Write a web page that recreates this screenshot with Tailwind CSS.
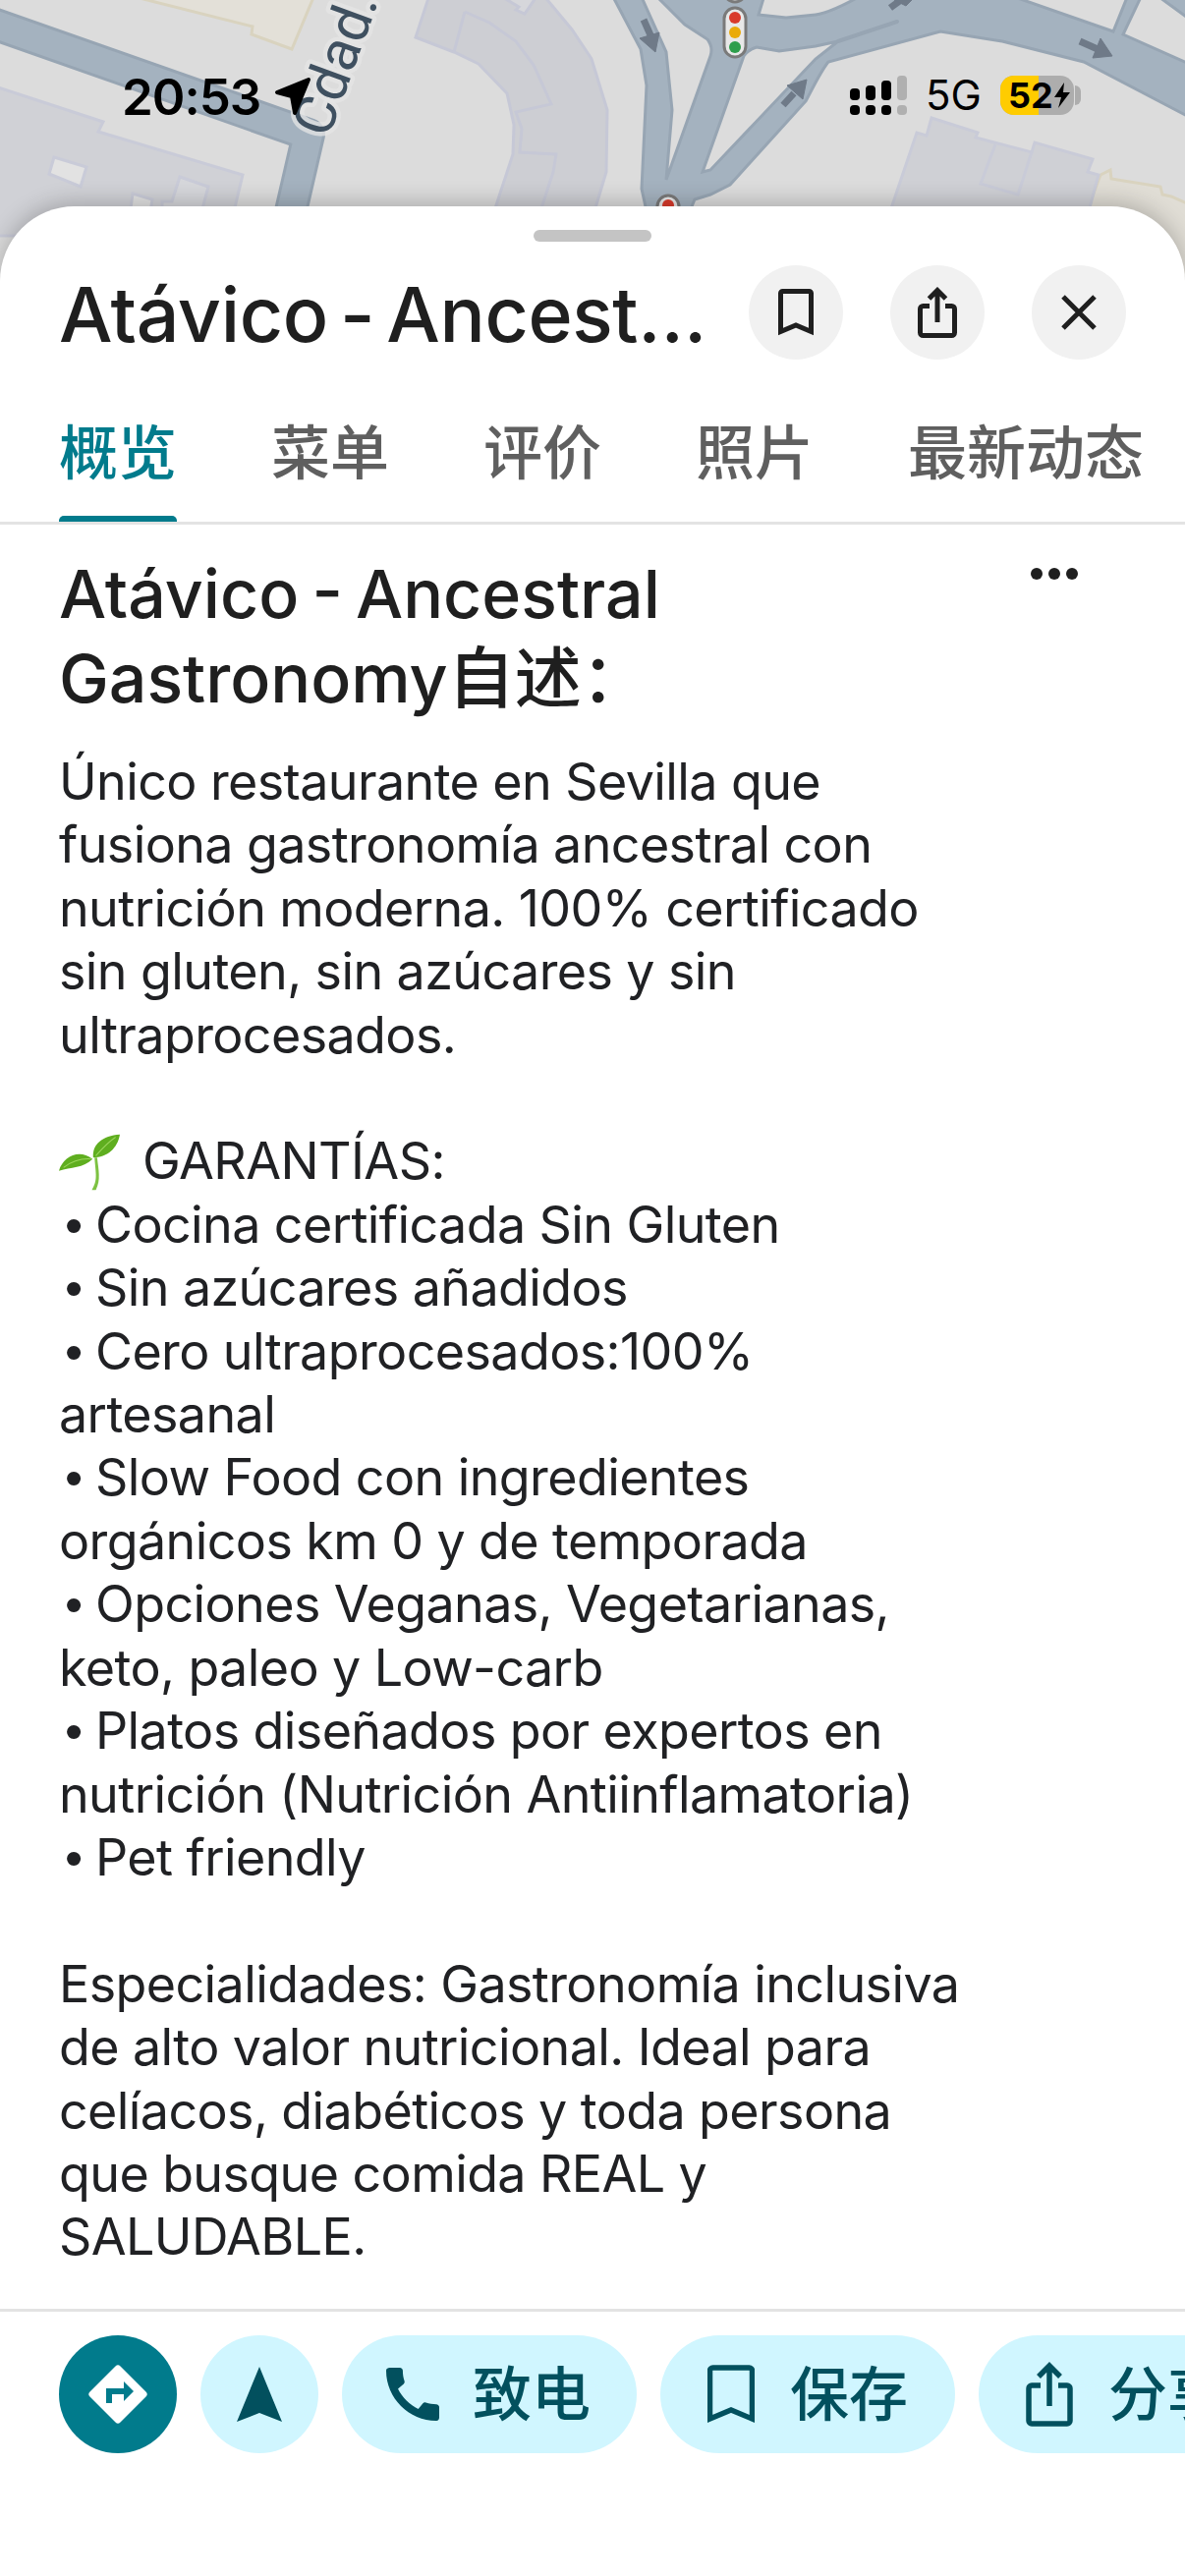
<!DOCTYPE html>
<html lang="zh">
<head>
  <meta charset="UTF-8" />
  <meta name="viewport" content="width=device-width, initial-scale=1" />
  <title>Atávico - Ancestral Gastronomy</title>
  <script src="https://cdn.jsdelivr.net/npm/@tailwindcss/browser@4"></script>
</head>
<body class="bg-white">
  <div class="relative w-[1206px] h-[2622px] overflow-hidden bg-[#dcdcdc] font-['Inter','Noto_Sans_CJK_SC',sans-serif] text-[#202124]">

    <!-- Map behind the sheet -->
    <svg class="absolute left-0 top-0" width="1206" height="300" viewBox="0 0 1206 300" xmlns="http://www.w3.org/2000/svg">
      <!-- buildings -->
      <polygon points="130,-5 257,27 256,35 297,50 320,-5" fill="#e3e0d8" stroke="#d9d3bf" stroke-width="3"/>
      <polygon points="1120,178 1130,173 1131,182 1181,190 1183,198 1192,200 1210,208 1210,295 1090,295 1108,210" fill="#e0ddd5" stroke="#d9d3bf" stroke-width="3"/>
      <polygon points="-5,88 105,124 100,134 247,178 232,240 -5,240" fill="#d0d1d6" stroke="#c9cbd8" stroke-width="3"/>
      <polygon points="55,160 88,170 82,190 50,177" fill="#e2e2e2" stroke="#c9cbd8" stroke-width="3"/>
      <polygon points="135,197 155,203 150,235 130,235" fill="#e2e2e2" stroke="#c9cbd8" stroke-width="3"/>
      <polygon points="165,205 175,205 183,180 212,190 200,235 165,235" fill="#d6d7db" stroke="#c9cbd8" stroke-width="3"/>
      <polygon points="437,-5 423,38 462,53 487,65 516,95 523,127 522,157 503,215 605,215 617,175 618,112 602,60 582,30 553,-5" fill="#cdced3" stroke="#c6c8d6" stroke-width="3"/>
      <polyline points="473,12 462,53" fill="none" stroke="#c6c8d6" stroke-width="3"/>
      <polyline points="473,12 498,23 525,42 543,66 561,106 525,114 531,131 529,155 566,157 563,175 550,215" fill="none" stroke="#c6c8d6" stroke-width="3"/>
      <polyline points="513,-2 528,7 525,10 534,14 545,-2" fill="#d6d7db" stroke="#c6c8d6" stroke-width="3"/>
      <polygon points="948,120 995,135 993,140 1050,155 1053,145 1112,162 1107,175 1118,178 1108,215 906,215 933,135 943,138" fill="#cfd0d5" stroke="#c9cbd8" stroke-width="3"/>
      <polyline points="1013,147 998,187 1036,198 1050,155" fill="none" stroke="#c9cbd8" stroke-width="3"/>
      <!-- roads -->
      <polyline points="-10,23 314,137 296,215" fill="none" stroke="#97a5b3" stroke-width="34" stroke-linejoin="round"/>
      <polyline points="-10,23 314,137 296,215" fill="none" stroke="#a4b2bf" stroke-width="28" stroke-linejoin="round"/>
      <path fill-rule="evenodd" fill="#a4b2bf" stroke="#97a5b3" stroke-width="3" d="M623,-5 L652,50 L658,87 L653,192 L658,215 L702,215 L707,203 L723,198 L743,188 L820,103 C828,88 835,73 843,63 L957,32 L1020,42 L1103,63 L1210,119 L1210,65 L1143,35 L1162,-5 L1148,-5 L1133,32 L1027,-5 L877,-5 C860,5 840,14 830,15 L800,18 L772,15 L778,-5 L667,-5 L697,25 L720,40 Q726,48 723,57 L678,183 L684,112 L678,53 L652,-5 Z M715,175 L757,57 Q762,50 770,48 L793,52 L830,47 L853,42 L830,60 L723,173 Z"/>
      <polygon points="1177,-5 1210,19 1210,-5" fill="#a4b2bf" stroke="#97a5b3" stroke-width="3"/>
      <line x1="853" y1="42" x2="913" y2="22" stroke="#97a5b3" stroke-width="4" stroke-linecap="round"/>
      <!-- one way arrows -->
      <g fill="#6f7a88" stroke="#6f7a88">
        <line x1="655" y1="20" x2="663" y2="38" stroke-width="7"/>
        <polygon points="651,39 671,33 667,53" stroke-width="1"/>
        <line x1="797" y1="107" x2="808" y2="95" stroke-width="7"/>
        <polygon points="801,87 821,81 817,101" stroke-width="1"/>
        <line x1="1099" y1="42" x2="1117" y2="50" stroke-width="7"/>
        <polygon points="1120,39 1132,57 1112,59" stroke-width="1"/>
        <line x1="906" y1="8" x2="917" y2="0" stroke-width="7"/>
        <polygon points="910,0 928,0 922,6" stroke-width="1"/>
      </g>
      <!-- traffic lights -->
      <rect x="737" y="-20" width="22" height="22" rx="11" fill="#e8e8e8" stroke="#7a7a7a" stroke-width="3"/>
      <rect x="737" y="8" width="22" height="50" rx="11" fill="#e8e8e8" stroke="#7a7a7a" stroke-width="3"/>
      <circle cx="748" cy="18" r="6" fill="#d93a2b"/>
      <circle cx="748" cy="33" r="6" fill="#eaab0a"/>
      <circle cx="748" cy="48" r="6" fill="#2e9e4b"/>
      <rect x="669" y="199" width="22" height="50" rx="11" fill="#e8e8e8" stroke="#7a7a7a" stroke-width="3"/>
      <circle cx="680" cy="209" r="6" fill="#d93a2b"/>
      <!-- street label -->
      <text x="334" y="142" transform="rotate(-70 334 142)" class="font-['Roboto',sans-serif] text-[58px]" fill="#3f5060" stroke="#e6e6e6" stroke-opacity="0.75" stroke-width="9" stroke-linejoin="round" paint-order="stroke">Cdad.</text>
    </svg>

    <!-- Status bar -->
    <div class="absolute left-[124px] top-[72px] flex items-center h-[52px] text-black">
      <span class="text-[51px] font-semibold leading-none tracking-[-1px]">20:53</span>
      <svg class="ml-[14px]" width="38" height="40" viewBox="0 0 38 40" xmlns="http://www.w3.org/2000/svg">
        <polygon points="3,16 35,3 21,37 18,20" fill="#000" stroke="#000" stroke-width="4" stroke-linejoin="round"/>
      </svg>
    </div>
    <div class="absolute left-[865px] top-[77px] flex items-center h-[40px] text-black">
      <div class="grid grid-cols-4 gap-x-[6px] gap-y-[5px] w-[58px] h-[40px] items-end">
        <div class="h-[12px] rounded-[4px] bg-black"></div>
        <div class="h-[15px] rounded-[4px] bg-black"></div>
        <div class="h-[20px] rounded-[4px] bg-black"></div>
        <div class="h-[25px] rounded-[4px] bg-[#b0b0b0]"></div>
        <div class="h-[10px] rounded-[4px] bg-black"></div>
        <div class="h-[10px] rounded-[4px] bg-black"></div>
        <div class="h-[10px] rounded-[4px] bg-black"></div>
        <div class="h-[10px] rounded-[4px] bg-[#b0b0b0]"></div>
      </div>
      <span class="ml-[19px] text-[42px] leading-none">5G</span>
      <div class="relative ml-[19px] w-[75px] h-[40px] rounded-[14px] overflow-hidden bg-[#adadad] flex items-center">
        <div class="absolute left-0 top-0 bottom-0 w-[39px] bg-[#ffcc00]"></div>
        <span class="relative ml-[8px] text-[36px] font-bold leading-none">52</span>
        <svg class="relative" width="18" height="26" viewBox="0 0 18 26" xmlns="http://www.w3.org/2000/svg">
          <polygon points="11,0 1,15 8,15 5,26 17,10 10,10" fill="#000"/>
        </svg>
      </div>
      <div class="ml-[1px] w-[6px] h-[20px] rounded-r-full bg-[#adadad]"></div>
    </div>

    <!-- Sheet -->
    <div class="relative mt-[210px] h-[2412px] flex flex-col bg-white rounded-t-[76px] shadow-[0_-4px_22px_rgba(0,0,0,0.22)]">
      <div class="mx-auto mt-[24px] w-[120px] h-[12px] rounded-full bg-[#c4c4c4]"></div>

      <!-- Title row -->
      <div class="mt-[24px] flex items-center pl-[60px] pr-[60px] h-[96px]">
        <h1 class="w-[672px] truncate text-[77px] font-medium leading-[96px] pt-[3px] tracking-[-0.4px] [word-spacing:-8px] text-[#1f1f1f]">Atávico - Ancestral Gastronomy</h1>
        <div class="ml-auto flex gap-[48px]">
          <button class="w-[96px] h-[96px] rounded-full bg-[#f1f1f1] flex items-center justify-center">
            <svg width="40" height="50" viewBox="0 0 40 50" fill="none" xmlns="http://www.w3.org/2000/svg">
              <path d="M4.5 44.5V5.5a2 2 0 012-2h27a2 2 0 012 2v39L20 38z" stroke="#1f1f1f" stroke-width="5"/>
            </svg>
          </button>
          <button class="w-[96px] h-[96px] rounded-full bg-[#f1f1f1] flex items-center justify-center">
            <svg width="40" height="52" viewBox="0 0 40 52" fill="none" xmlns="http://www.w3.org/2000/svg">
              <path d="M12 19.5H5.5a3 3 0 00-3 3v24a3 3 0 003 3h29a3 3 0 003-3v-24a3 3 0 00-3-3H28" stroke="#1f1f1f" stroke-width="5"/>
              <path d="M20 36V4M11.5 12L20 3.5 28.500 12" stroke="#1f1f1f" stroke-width="5"/>
            </svg>
          </button>
          <button class="w-[96px] h-[96px] rounded-full bg-[#f1f1f1] flex items-center justify-center">
            <svg width="36" height="36" viewBox="0 0 36 36" fill="none" xmlns="http://www.w3.org/2000/svg">
              <path d="M2 2l32 32M34 2L2 34" stroke="#1f1f1f" stroke-width="5"/>
            </svg>
          </button>
        </div>
      </div>

      <!-- Tabs -->
      <div class="mt-[48px] flex h-[120px] border-b-[3px] border-[#e3e3e3] pl-[60px] gap-[96px] pt-[11px] text-[60px] font-medium leading-[72px] text-[#5f5f5f] whitespace-nowrap overflow-hidden shrink-0">
        <div class="relative w-[120px] h-[106px] text-[#017b8c]">
          概览
          <div class="absolute left-0 right-0 bottom-[-3px] h-[9px] rounded-t-[5px] bg-[#017b8c]"></div>
        </div>
        <div class="w-[120px]">菜单</div>
        <div class="w-[120px]">评价</div>
        <div class="w-[120px]">照片</div>
        <div>最新动态</div>
      </div>

      <!-- Description -->
      <div class="relative flex-1 overflow-hidden pl-[60px]">
        <button class="absolute left-[1049px] top-[44px] flex gap-[6px]">
          <span class="w-[12px] h-[12px] rounded-full bg-[#1f1f1f]"></span>
          <span class="w-[12px] h-[12px] rounded-full bg-[#1f1f1f]"></span>
          <span class="w-[12px] h-[12px] rounded-full bg-[#1f1f1f]"></span>
        </button>
        <h2 class="mt-[27px] text-[68px] font-medium leading-[86px] [word-spacing:-5px] text-[#1f1f1f]">Atávico - Ancestral<br />Gastronomy自述<span class="leading-[40px] font-['Noto_Sans_CJK_TC',sans-serif]">：</span></h2>
        <p class="mt-[31px] text-[52px] leading-[64.4px] tracking-[-0.6px] whitespace-nowrap">
          Único restaurante en Sevilla que<br />
          fusiona gastronomía ancestral con<br />
          nutrición moderna. 100% certificado<br />
          sin gluten, sin azúcares y sin<br />
          ultraprocesados.<br />
          <br />
          <svg class="inline-block my-[-10px] align-[-2px] mr-[23px]" width="62" height="58" viewBox="0 0 185 172" xmlns="http://www.w3.org/2000/svg">
            <path d="M108 72 C112 124 118 140 100 170 L112 170 C128 140 120 110 116 72 Z" fill="#7dc242"/>
            <path d="M0 112 C12 70 60 44 102 76 C74 104 36 100 0 112 Z" fill="#5fae1f"/>
            <path d="M104 72 C100 32 132 6 185 2 C178 44 146 72 104 72 Z" fill="#5fae1f"/>
            <path d="M14 102 C40 82 70 74 98 76 M112 66 C130 46 150 24 172 10" fill="none" stroke="#9bd65c" stroke-width="3"/>
          </svg>GARANTÍAS:<br />
          <span class="inline-block w-[37px] pl-[6px] font-['Liberation_Sans',sans-serif]">•</span>Cocina certificada Sin Gluten<br />
          <span class="inline-block w-[37px] pl-[6px] font-['Liberation_Sans',sans-serif]">•</span>Sin azúcares añadidos<br />
          <span class="inline-block w-[37px] pl-[6px] font-['Liberation_Sans',sans-serif]">•</span>Cero ultraprocesados:100%<br />
          artesanal<br />
          <span class="inline-block w-[37px] pl-[6px] font-['Liberation_Sans',sans-serif]">•</span>Slow Food con ingredientes<br />
          orgánicos km 0 y de temporada<br />
          <span class="inline-block w-[37px] pl-[6px] font-['Liberation_Sans',sans-serif]">•</span>Opciones Veganas, Vegetarianas,<br />
          keto, paleo y Low-carb<br />
          <span class="inline-block w-[37px] pl-[6px] font-['Liberation_Sans',sans-serif]">•</span>Platos diseñados por expertos en<br />
          nutrición (Nutrición Antiinflamatoria)<br />
          <span class="inline-block w-[37px] pl-[6px] font-['Liberation_Sans',sans-serif]">•</span>Pet friendly<br />
          <br />
          Especialidades: Gastronomía inclusiva<br />
          de alto valor nutricional. Ideal para<br />
          celíacos, diabéticos y toda persona<br />
          que busque comida REAL y<br />
          SALUDABLE.
        </p>
      </div>

      <!-- Action bar -->
      <div class="h-[272px] shrink-0 border-t-[3px] border-[#e3e3e3] pt-[24px] pl-[60px] flex items-start gap-[24px] overflow-hidden whitespace-nowrap text-[60px] font-medium text-[#02505e]">
        <button class="w-[120px] h-[120px] shrink-0 rounded-full bg-[#017b8c] flex items-center justify-center">
          <svg width="60" height="60" viewBox="0 0 60 60" xmlns="http://www.w3.org/2000/svg">
            <path d="M27.500 1.500a3.500 3.500 0 015 0l26 26a3.500 3.500 0 010 5l-26 26a3.500 3.500 0 01-5 0l-26-26a3.500 3.500 0 010-5z" fill="#fff"/>
            <path d="M21 39V27h17" fill="none" stroke="#017b8c" stroke-width="6"/>
            <polygon points="36,17 46,27 36,37" fill="#017b8c"/>
          </svg>
        </button>
        <button class="w-[120px] h-[120px] shrink-0 rounded-full bg-[#d0f6ff] flex items-center justify-center">
          <svg width="46" height="56" viewBox="0 0 46 56" xmlns="http://www.w3.org/2000/svg">
            <polygon points="23,0 46,56 23,47 0,56" fill="#02505e"/>
          </svg>
        </button>
        <button class="w-[300px] h-[120px] shrink-0 rounded-full bg-[#d0f6ff] flex items-center pl-[36px] gap-[25px]">
          <svg width="72" height="72" viewBox="0 0 24 24" xmlns="http://www.w3.org/2000/svg">
            <path d="M20.010 15.380c-1.230 0-2.420-.2-3.530-.56a.977.977 0 00-1.010.24l-1.570 1.970c-2.830-1.350-5.480-3.900-6.890-6.830l1.950-1.660c.27-.28.35-.67.24-1.020-.37-1.110-.56-2.300-.56-3.530 0-.54-.45-.99-.99-.99H4.190C3.650 3 3 3.240 3 3.990 3 13.280 10.730 21 20.010 21c.71 0 .99-.63.99-1.180v-3.450c0-.54-.45-.99-.99-.99z" fill="#02505e"/>
          </svg>
          <span class="leading-none">致电</span>
        </button>
        <button class="w-[300px] h-[120px] shrink-0 rounded-full bg-[#d0f6ff] flex items-center pl-[48px] gap-[36px]">
          <svg width="48" height="60" viewBox="0 0 48 60" fill="none" xmlns="http://www.w3.org/2000/svg">
            <path d="M2.500 55V6a3 3 0 013-3h37a3 3 0 013 3v49L24 46z" stroke="#02505e" stroke-width="5.500"/>
          </svg>
          <span class="leading-none">保存</span>
        </button>
        <button class="w-[300px] h-[120px] shrink-0 rounded-full bg-[#d0f6ff] flex items-center pl-[48px] gap-[36px]">
          <svg width="48" height="66" viewBox="0 0 48 66" fill="none" xmlns="http://www.w3.org/2000/svg">
            <path d="M15 24H6a3 3 0 00-3 3v33a3 3 0 003 3h36a3 3 0 003-3V27a3 3 0 00-3-3h-9" stroke="#02505e" stroke-width="5.500"/>
            <path d="M24 45V4M13 15L24 4l11 11" stroke="#02505e" stroke-width="5.500"/>
          </svg>
          <span class="leading-none">分享</span>
        </button>
      </div>
    </div>
  </div>
</body>
</html>
